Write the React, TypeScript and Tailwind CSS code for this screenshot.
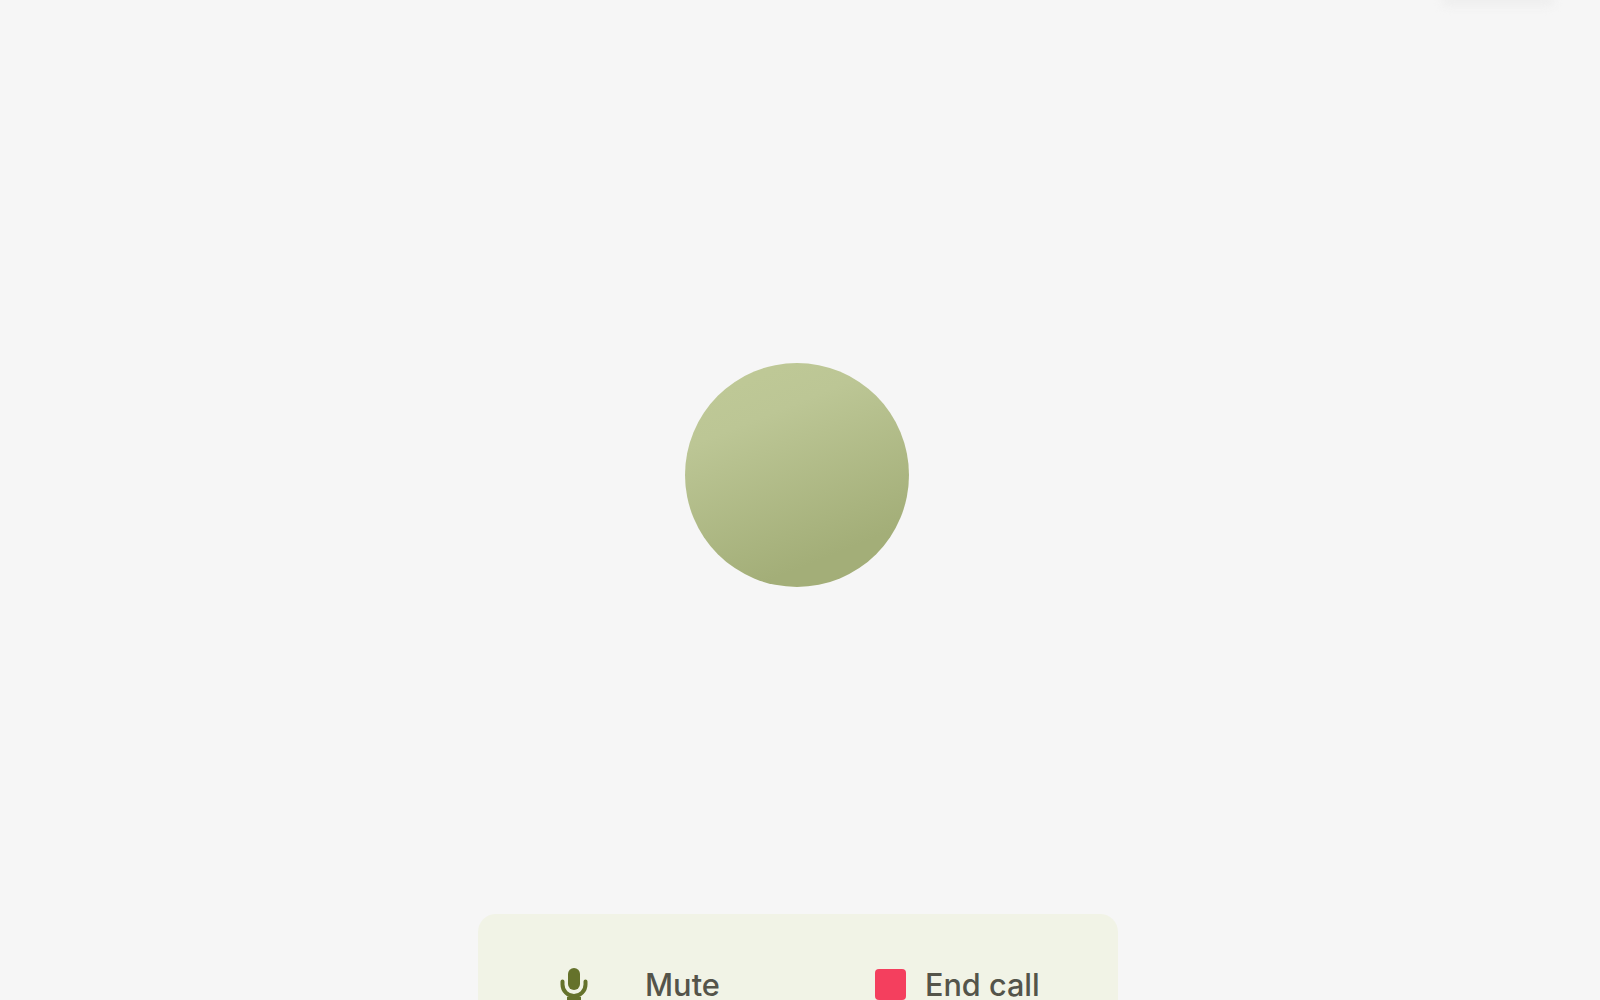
const MicIcon = () => (
  <svg width="32" height="40" viewBox="0 0 32 40" fill="none" className="shrink-0">
    <rect x="10" y="0" width="12" height="22" rx="6" fill="#65722b" />
    <path d="M4.5 13.5v3a11.5 11.5 0 0 0 23 0v-3" stroke="#65722b" strokeWidth="4" strokeLinecap="round" />
    <path d="M16 28v5M9 30.5h14" stroke="#65722b" strokeWidth="3.6" />
  </svg>
)

export default function App() {
  return (
    <div
      className="relative h-[1000px] overflow-hidden bg-[#f6f6f6] pr-[6px] pt-[363px] flex flex-col items-center"
      style={{ fontFamily: 'Inter, "Liberation Sans", sans-serif' }}
    >
      {/* top right blur */}
      <div className="absolute left-[1442px] -top-[6px] h-[12px] w-[112px] rounded-full bg-[#eeeeee] blur-[4px]" />

      {/* orb */}
      <div className="h-[224px] w-[224px] shrink-0 rounded-full bg-[linear-gradient(158deg,#c0ca97_0%,#bcc695_27%,#a3ae78_80%)]" />

      {/* call controls */}
      <div className="ml-[2px] mt-[327px] flex h-[120px] w-[640px] shrink-0 items-start rounded-[18px] bg-[#f1f3e6] pt-[54px] text-[#54544a]">
        <button className="ml-[80px] flex w-[320px] items-start">
          <div>
            <MicIcon />
          </div>
          <span className="ml-[55px] -mt-[1px] text-[30.8px] leading-[36px] font-medium">Mute</span>
        </button>
        <button className="-ml-[3px] flex items-start">
          <span className="mt-[1px] h-[31px] w-[31px] rounded-[4px] bg-[#f43f5e]" />
          <span className="ml-[19px] -mt-[1px] text-[30.6px] leading-[36px] font-medium">End call</span>
        </button>
      </div>
    </div>
  )
}
